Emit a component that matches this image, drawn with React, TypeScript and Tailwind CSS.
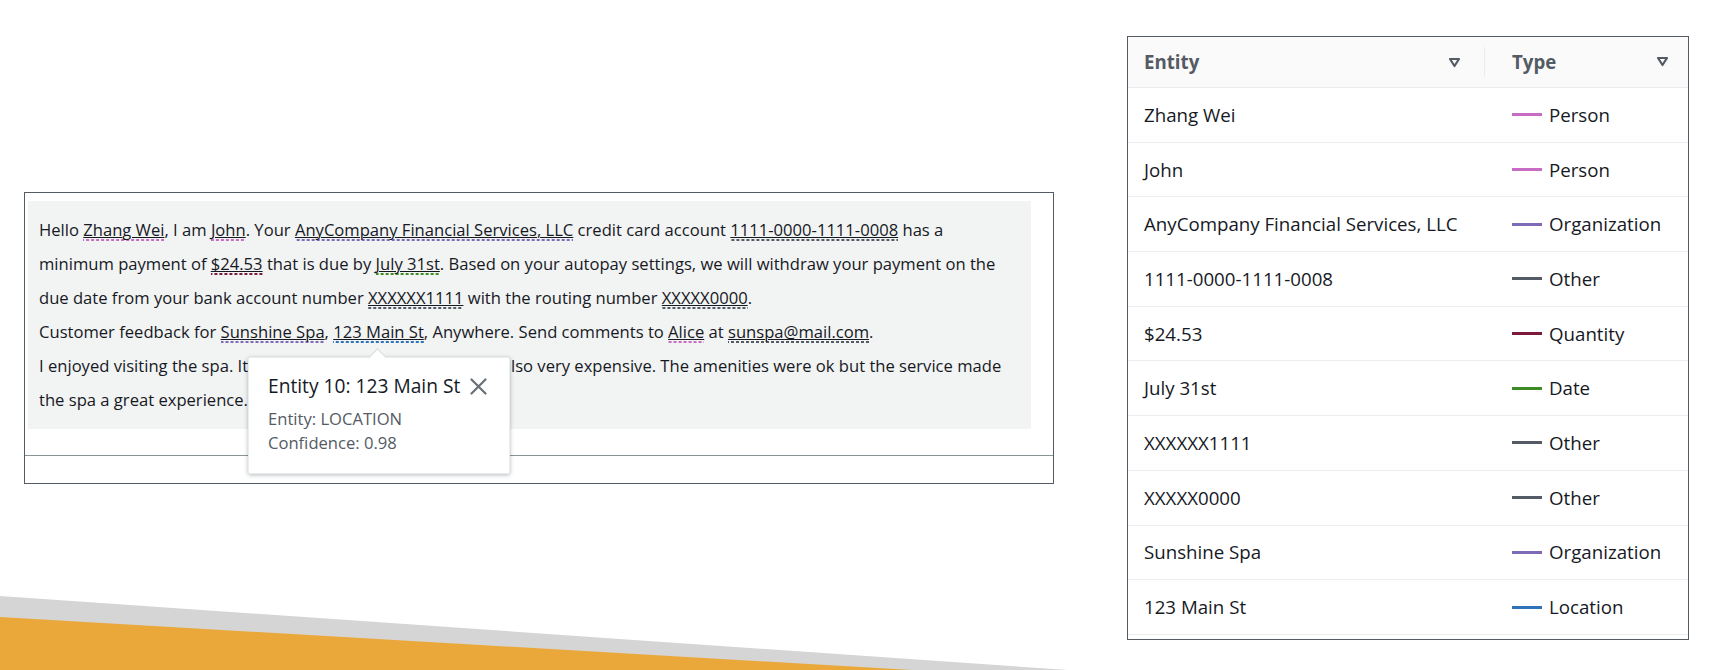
import React from 'react';

type Kind = 'person' | 'org' | 'other' | 'quantity' | 'date' | 'location';

// dashed marker under each detected entity
const dash: Record<Kind, string> = {
  person: 'bg-[linear-gradient(to_right,#c86dc3_60%,transparent_60%)]',
  org: 'bg-[linear-gradient(to_right,#7d6bb8_60%,transparent_60%)]',
  other: 'bg-[linear-gradient(to_right,#545b64_60%,transparent_60%)]',
  quantity: 'bg-[linear-gradient(to_right,#7b1a38_60%,transparent_60%)]',
  date: 'bg-[linear-gradient(to_right,#3d8b24_60%,transparent_60%)]',
  location: 'bg-[linear-gradient(to_right,#2e73b8_60%,transparent_60%)]',
};

const swatch: Record<Kind, string> = {
  person: 'bg-[#c86dc3]',
  org: 'bg-[#7d6bb8]',
  other: 'bg-[#545b64]',
  quantity: 'bg-[#7b1a38]',
  date: 'bg-[#3d8b24]',
  location: 'bg-[#2e73b8]',
};

const typeLabel: Record<Kind, string> = {
  person: 'Person',
  org: 'Organization',
  other: 'Other',
  quantity: 'Quantity',
  date: 'Date',
  location: 'Location',
};

function Ent({ k, children }: { k: Kind; children: React.ReactNode }) {
  return (
    <span
      className={`${dash[k]} bg-[length:5px_2px] bg-repeat-x bg-bottom underline decoration-1 underline-offset-[1px] decoration-[#16191f]`}
    >
      {children}
    </span>
  );
}

const rows: [string, Kind][] = [
  ['Zhang Wei', 'person'],
  ['John', 'person'],
  ['AnyCompany Financial Services, LLC', 'org'],
  ['1111-0000-1111-0008', 'other'],
  ['$24.53', 'quantity'],
  ['July 31st', 'date'],
  ['XXXXXX1111', 'other'],
  ['XXXXX0000', 'other'],
  ['Sunshine Spa', 'org'],
  ['123 Main St', 'location'],
];

function SortIcon() {
  return (
    <svg width="13" height="11" viewBox="0 0 13 11">
      <path d="M2 2h9L6.5 9z" fill="none" stroke="#545b64" strokeWidth="2.2" strokeLinejoin="round" />
    </svg>
  );
}

function CloseIcon() {
  return (
    <svg width="17" height="17" viewBox="0 0 17 17" className="shrink-0">
      <path d="M1.5 1.5l14 14M15.5 1.5l-14 14" stroke="#687078" strokeWidth="2.2" strokeLinecap="round" />
    </svg>
  );
}

export default function App() {
  return (
    <div className="relative h-[670px] w-full overflow-hidden bg-white font-['Open_Sans',sans-serif] text-[#16191f]">
      <div className="flex items-start pl-[24px]">
        {/* annotated text panel */}
        <div className="relative mt-[192px] w-[1030px] border border-[#545b64] bg-white pl-[3px] pr-[22px] pt-[8px]">
          <div className="bg-[#f2f3f3] px-[11px] py-[12px] text-[16.6px] leading-[34px] whitespace-nowrap">
            <div>
              Hello <Ent k="person">Zhang Wei</Ent>, I am <Ent k="person">John</Ent>. Your{' '}
              <Ent k="org">AnyCompany Financial Services, LLC</Ent> credit card account{' '}
              <Ent k="other">1111-0000-1111-0008</Ent> has a
            </div>
            <div>
              minimum payment of <Ent k="quantity">$24.53</Ent> that is due by <Ent k="date">July 31st</Ent>. Based on
              your autopay settings, we will withdraw your payment on the
            </div>
            <div>
              due date from your bank account number <Ent k="other">XXXXXX1111</Ent> with the routing number{' '}
              <Ent k="other">XXXXX0000</Ent>.
            </div>
            <div>
              Customer feedback for <Ent k="org">Sunshine Spa</Ent>, <Ent k="location">123 Main St</Ent>, Anywhere.
              Send comments to <Ent k="person">Alice</Ent> at <Ent k="other">sunspa@mail.com</Ent>.
            </div>
            <div>
              I enjoyed visiting the spa. It was very comfortable but it was also very expensive. The amenities were ok
              but the service made
            </div>
            <div>the spa a great experience.</div>
          </div>
          <div className="mt-[26px] -ml-[3px] -mr-[22px] h-[28px] border-t border-[#879596]" />

          {/* popover */}
          <div className="absolute left-[223px] top-[164px] w-[262px] rounded-[2px] border border-[#eaeded] bg-white pl-[19px] pr-[20px] pb-[18px] pt-[14px] shadow-[0_1px_4px_rgba(0,28,36,0.3)]">
            <div className="absolute -top-[7px] left-[122px] h-[13px] w-[13px] rotate-45 border-l border-t border-[#d5dbdb] bg-white" />
            <div className="flex items-center gap-[10px] whitespace-nowrap text-[19.2px] leading-[28px]">
              <span>Entity 10: 123 Main St</span>
              <CloseIcon />
            </div>
            <div className="mt-[7px] text-[16.6px] leading-[24px] text-[#545b64]">Entity: LOCATION</div>
            <div className="text-[16.6px] leading-[24px] text-[#545b64]">Confidence: 0.98</div>
          </div>
        </div>

        {/* entity table */}
        <div className="ml-[73px] mt-[36px] w-[562px] border border-[#545b64] bg-white text-[18.7px]">
          <div className="flex h-[51px] items-center border-b border-[#eaeded] bg-[#fafafa] font-bold text-[#545b64]">
            <div className="flex w-[368px] items-center pl-[16px] pr-[11px]">
              <span>Entity</span>
              <span className="ml-auto flex">
                <SortIcon />
              </span>
              <span className="ml-[23px] h-[30px] w-px bg-[#eaeded]" />
            </div>
            <div className="flex flex-1 items-center pl-[16px] pr-[19px]">
              <span>Type</span>
              <span className="ml-auto flex">
                <SortIcon />
              </span>
            </div>
          </div>
          {rows.map(([name, k]) => (
            <div key={name} className="flex h-[54.7px] items-center border-b border-[#eaeded]">
              <div className="w-[368px] pl-[16px]">{name}</div>
              <div className="flex flex-1 items-center gap-[7px] pl-[16px]">
                <span className={`h-[3px] w-[30px] ${swatch[k]}`} />
                <span>{typeLabel[k]}</span>
              </div>
            </div>
          ))}
          <div className="h-[4px]" />
        </div>
      </div>

      {/* decorative slide footer */}
      <svg className="absolute bottom-0 left-0" width="1712" height="74" viewBox="0 0 1712 74">
        <polygon points="0,0 1068,74 0,74" fill="#d5d5d5" />
        <polygon points="0,21 912,74 0,74" fill="#eaa83a" />
      </svg>
    </div>
  );
}
